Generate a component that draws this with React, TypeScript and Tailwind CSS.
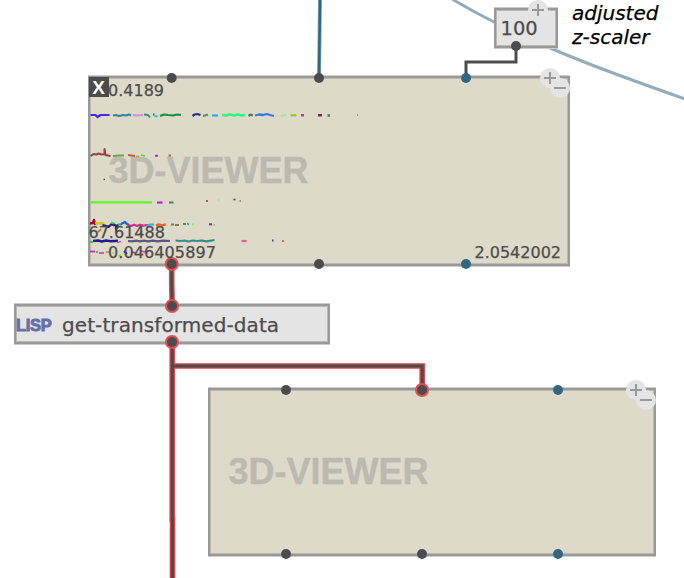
import React from 'react';

type Point = [number, number];

const frame =
  'absolute border-2 border-[#999999] shadow-[0_-1px_0_#cccccc,0_1px_0_#cccccc,inset_0_0_0_1px_#bbb9ae]';
const label =
  "whitespace-nowrap leading-none text-[#4c4c4c] font-['DejaVu_Sans',sans-serif] [-webkit-text-stroke:0.25px_#4c4c4c]";
const title =
  "ml-[18.5px] whitespace-nowrap font-['Liberation_Sans',Arial,sans-serif] text-[36px] leading-none font-bold text-[#bcb9b1] [-webkit-text-stroke:0.4px_#bcb9b1]";

const darkPorts: Point[] = [
  [171.7, 78], [319, 78], [319, 264], [516, 46],
  [286, 390], [286, 554], [422, 554],
];
const bluePorts: Point[] = [[466, 78], [466, 264], [558, 390], [558, 554]];
const activePorts: Point[] = [[171.7, 264], [172, 306], [172, 342], [422, 390]];

// Trace segments in canvas coordinates: path, colour, thickness.
const traces: [string, string, number][] = [
  ['M90.500 115h5l2 2 3-2h9', '#4328ee', 2.2],
  ['M113 115.500l3-.5 3 1 4-1 3 .5 3-1 2 1', '#36839a', 2.1],
  ['M133 115l4 .5 6-.5', '#d38ee0', 2.1],
  ['M144 114.500l4 .5 2 2.500', '#39917c', 2],
  ['M153 114.500h1.500', '#344ee0', 2],
  ['M154.500 116l3 .5', '#20c6c5', 2.2],
  ['M160 116l4-1.500 4 .5 5 .5 4-1 4 .5', '#168f47', 2.2],
  ['M192.500 116l2-1.500 3-.5 3 1', '#2d2d91', 2.2],
  ['M203 116l2-.5 3-1', '#578f70', 2],
  ['M212 115.500h6', '#2fa5ed', 2.1],
  ['M222 115l4 .5 4-1.200 4 1.200 4-1 4 1 3-.5', '#2ff77e', 2.4],
  ['M248.500 116l2-1.500 2.500 1', '#6d6c75', 2.2],
  ['M255 115.500l4-1 4 .5 4-1 3 1 4 1', '#2e7dde', 2.3],
  ['M281 116l5-1', '#95ef79', 2],
  ['M290.500 115.300h6', '#99c522', 2.2],
  ['M301 115.200h3', '#c32daa', 2.4],
  ['M318 115.200h4', '#74254a', 2.4],
  ['M327.500 115.500h2.500', '#2e8b2e', 2.4],
  ['M357.500 114v2', '#cc71bf', 1],
  ['M90.500 156l3-2 3 .5 2-1 3 1 3-.5v-5l1 6 5 1', '#94404f', 2],
  ['M113 156l6-.5h5', '#62aa45', 2],
  ['M128 155l7 1', '#b66152', 2],
  ['M136 156.500h3', '#c5a91e', 1.8],
  ['M141 155l4 1', '#65c859', 1.8],
  ['M155 155.800h3', '#a133d1', 2],
  ['M168.500 155.500h2.500', '#c76331', 2],
  ['M90.500 202.300h61.500', '#61fb21', 2.3],
  ['M157 202.500h5.500', '#a728ed', 2.2],
  ['M169 202.500h4.500', '#6b6d61', 2],
  ['M206 201h2', '#e04830', 1.8],
  ['M218 200h1', '#83ed90', 1.8],
  ['M233.500 199.500h2', '#315b39', 1.7],
  ['M239.500 201h1.500', '#b7626e', 1.7],
  ['M103.500 179.500h1.500', '#555', 1.5],
  ['M125 179.500h2', '#9bc94b', 1.6],
  ['M90 223.500l3-.5 1-3 1 4 1-2', '#a2072e', 2.4],
  ['M95 223l4 .5 3-.5 2 1', '#d3c816', 2.6],
  ['M102.500 225l4 1 2 1 3-3 3 1.500', '#291b79', 2.3],
  ['M111 222.500l4 1.500', '#3bd06b', 2],
  ['M113 224.500l3 1v4l2-5', '#421770', 2.2],
  ['M118 224.500h4', '#29b74b', 2],
  ['M121 224l4-2 2 2 2 1', '#235de1', 2.3],
  ['M128 225l3 1 3-1.300 3 1.300 3-1.300 3 1 5-.7', '#cc3283', 2.2],
  ['M147 226l3-1.500h4', '#36a5ee', 2.2],
  ['M156 225.500l3-1 3 .8 4-1', '#e36a29', 2.4],
  ['M171 224.500h3m1 .5h4', '#7d7c49', 2],
  ['M183 224h3', '#26a749', 2],
  ['M187 223.500l2 1', '#289eb6', 1.6],
  ['M192 224.500h2', '#84f83e', 2],
  ['M209 224.300h3', '#722be5', 2.1],
  ['M213.500 224.800h1.500', '#b7bc5b', 1.8],
  ['M98 232l3-3', '#de6c36', 1.8],
  ['M140 234l2-3', '#9137c5', 1.6],
  ['M90 242h3', '#35b950', 1.9],
  ['M93 241l5-.5 4 1 4-1 5 .8 7-.5', '#25178e', 2.4],
  ['M117 242.500l4-1', '#d24fcc', 1.5],
  ['M128 241l4 .4 4-.8 4 .8 4-.8 4 .8 5-.8 5 .8 5-.8 7 .4', '#555884', 2.1],
  ['M175.500 240.500l5 .5 4-.5 4 1 4-1 5 .5 4-.5 5 .8 8-1.300', '#398b8b', 2.2],
  ['M241.500 241h5', '#ee5c99', 2.3],
  ['M272 240.500h1.500', '#41407e', 2],
  ['M282 241h2', '#d56b58', 1.8],
  ['M90 251.500h5', '#c427b9', 1.8],
  ['M96 252h2', '#27a94d', 1.7],
  ['M99 253h5', '#e52bc8', 1.6],
  ['M106 252h4', '#d08f27', 1.6],
  ['M112 253h2m4 3 3-1', '#8ae239', 1.7],
  ['M124 251l3 3', '#1429df', 2],
  ['M131 252l5 1m5-2 4 1', '#d939b4', 1.8],
];

function ResizeBadges({ x, y }: { x: number; y: number }) {
  return (
    <g stroke="#999999" strokeWidth="2">
      <circle cx={x} cy={y} r="10" fill="#e4e4e4" stroke="none" />
      <circle cx={x + 10} cy={y + 10} r="10" fill="#e4e4e4" stroke="none" />
      <path d={`M${x - 6} ${y}h12M${x} ${y - 6}v12M${x + 4} ${y + 10}h12`} />
    </g>
  );
}

export default function App() {
  return (
    <main className="relative h-[578px] w-[684px] overflow-hidden bg-white">
      <svg className="absolute inset-0" width="684" height="578" fill="none">
        <path d="M452 -1Q472 11 494 22C550 51 620 76 685 99" stroke="#91adbb" strokeWidth="3" />
      </svg>

      <section className={`${frame} left-[88px] top-[76px] flex h-[190px] w-[482px] flex-col bg-[#dddac9]`}>
        <header className="relative z-10 -mt-px -ml-px flex h-[22px] items-start">
          <button className="flex size-5 items-center justify-center bg-[#4c4c4c] pr-px font-['Liberation_Sans',Arial,sans-serif] text-[19px] leading-none font-bold text-white">
            X
          </button>
          <span className={`${label} mt-1.5 -ml-px text-[16px]`}>0.4189</span>
        </header>
        <h2 className={`${title} mt-[54px]`}>3D-VIEWER</h2>
        <svg className="absolute inset-0 size-full" viewBox="90 78 478 186" fill="none">
          {traces.map(([d, color, width], i) => (
            <path key={i} d={d} stroke={color} strokeWidth={width} strokeLinejoin="round" />
          ))}
        </svg>
        <footer className="relative z-10 mt-9 flex flex-col gap-1">
          <span className={`${label} -ml-[1.5px] text-[16px]`}>67.61488</span>
          <div className="flex justify-between pr-[7px] pl-[18px]">
            <span className={`${label} text-[16px] tracking-[0.1px]`}>0.046405897</span>
            <span className={`${label} text-[16px]`}>2.0542002</span>
          </div>
        </footer>
      </section>

      <section className={`${frame} left-[208px] top-[388px] flex h-[168px] w-[448px] items-start bg-[#dddac9] pt-16`}>
        <h2 className={title}>3D-VIEWER</h2>
      </section>

      <section className={`${frame} left-[14px] top-[304px] flex h-[40px] w-[316px] items-start bg-[#e4e4e4] pt-[9px]`}>
        <span className="mt-[1.5px] w-[46px] font-['Liberation_Sans',Arial,sans-serif] text-[16.5px] leading-none font-bold tracking-[-0.3px] text-[#6670a8] [-webkit-text-stroke:0.9px_#6670a8]">
          LISP
        </span>
        <span className={`${label} text-[20px] tracking-[0.09px]`}>get-transformed-data</span>
      </section>

      <section className={`${frame} left-[494px] top-[8px] flex h-[40px] w-[64px] items-start bg-[#e4e4e4] pt-[9px] pl-[4.5px]`}>
        <span className={`${label} text-[19.5px]`}>100</span>
      </section>

      <p className="absolute left-[572px] top-[1px] font-['DejaVu_Sans',sans-serif] text-[20px] leading-[24px] text-black italic [-webkit-text-stroke:0.25px_#000]">
        adjusted
        <br />
        z-scaler
      </p>

      <svg className="absolute inset-0" width="684" height="578" fill="none">
        <path d="M320 0L319 78" stroke="#8aabba" strokeWidth="4" />
        <path d="M320 0L319 78" stroke="#326681" strokeWidth="2.500" />
        <path d="M516 46V62H466V78" stroke="#4c4c4c" strokeWidth="3" />
        <g stroke="#e0454a" strokeWidth="5.600">
          <path d="M171.700 264V283L172.200 306M172.200 342V519H172.500V578" />
          <path d="M172 366H422.200V390" />
        </g>
        <g stroke="#4c4c4c" strokeWidth="3">
          <path d="M171.700 264V283L172.200 306M172.200 342V519H172.500V578" />
          <path d="M172 366H422.200V390" />
        </g>
        {darkPorts.map(([x, y]) => (
          <circle key={`${x}-${y}`} cx={x} cy={y} r="5" fill="#4c4c4c" />
        ))}
        {bluePorts.map(([x, y]) => (
          <circle key={`${x}-${y}`} cx={x} cy={y} r="5" fill="#336680" />
        ))}
        {activePorts.map(([x, y]) => (
          <circle key={`${x}-${y}`} cx={x} cy={y} r="6" fill="#4c4c4c" stroke="#e84c50" strokeWidth="2" />
        ))}
        <ResizeBadges x={550} y={78} />
        <ResizeBadges x={636} y={390} />
        <circle cx="538" cy="10" r="10" fill="#e4e4e4" />
        <path d="M532 10h12M538 4v12" stroke="#999999" strokeWidth="2" />
      </svg>
    </main>
  );
}
